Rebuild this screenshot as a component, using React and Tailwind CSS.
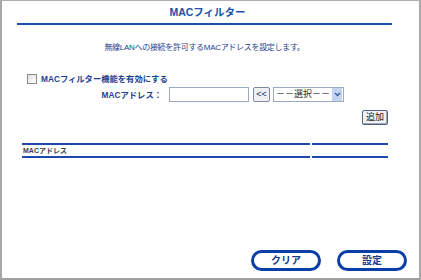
import React from "react";

const font = { fontFamily: '"Liberation Sans", "Noto Sans CJK JP", sans-serif' };

function PillButton({ children }) {
  return (
    <button className="w-[70px] h-[21px] rounded-full border-[3px] border-[#0b3fa8] bg-white text-[10px] font-bold text-[#1a3a8a] leading-none">
      {children}
    </button>
  );
}

export default function App() {
  return (
    <div
      style={font}
      className="w-[421px] h-[280px] bg-white border-t border-l-2 border-r-2 border-b-2 border-t-[#b0b0b0] border-l-[#a8a8a8] border-r-[#a8a8a8] border-b-[#a0a0a0] flex flex-col"
    >
      {/* Title */}
      <div className="pt-[4px] flex flex-col items-center">
        <h1 className="text-[10.5px] font-bold text-[#2050a8] leading-[15px] mr-[6px]">MACフィルター</h1>
        <div className="mt-[3px] w-[375px] h-[2px] bg-[#1d50a8] ml-[-12px]" />
      </div>

      {/* Description */}
      <p className="mt-[17px] text-center text-[8px] tracking-[-0.3px] text-[#1e3f90] leading-[12px] pr-[12px]">
        無線LANへの接続を許可するMACアドレスを設定します。
      </p>

      {/* Enable checkbox */}
      <div className="mt-[19px] ml-[25px] flex items-center gap-[4px]">
        <span className="w-[10px] h-[10px] border border-[#8a8a8a] bg-gradient-to-br from-[#e0e0e0] to-white" />
        <span className="text-[8.3px] font-bold text-[#1e3f90] leading-[12px]">MACフィルター機能を有効にする</span>
      </div>

      {/* MAC address row */}
      <div className="mt-[2px] flex items-center">
        <span className="w-[160px] text-right text-[8.3px] font-bold text-[#1e3f90] leading-[12px]">MACアドレス：</span>
        <input className="ml-[7px] w-[80px] h-[15px] border border-[#9aaac0] bg-white" />
        <button className="ml-[4px] w-[17px] h-[15px] border border-[#7a8aa0] rounded-[2px] bg-[#eef0f4] text-[9px] leading-none text-[#203060]">
          &lt;&lt;
        </button>
        <div className="ml-[3px] w-[71px] h-[15px] border border-[#9aaac0] flex items-center">
          <span className="flex-1 pl-[2px] text-[9px] text-[#303030] leading-none">－－選択－－</span>
          <span className="w-[10px] h-[13px] mr-[1px] bg-[#c4d4ee] flex items-center justify-center">
            <svg width="7" height="5" viewBox="0 0 7 5">
              <path d="M1 1 L3.5 3.5 L6 1" stroke="#3a5a9a" strokeWidth="1.3" fill="none" />
            </svg>
          </span>
        </div>
      </div>

      {/* Add button */}
      <div className="mt-[8px] flex justify-end pr-[31px]">
        <button className="w-[26px] h-[15px] border border-[#506080] rounded-[2px] bg-[#f2f2f4] text-[9px] leading-none text-[#202020] shadow-[inset_-1px_-1px_0_#a0a8b8]">
          追加
        </button>
      </div>

      {/* Table */}
      <div className="mt-[18px] ml-[20px] flex">
        <div className="w-[288px] border-t-2 border-b-2 border-[#1d48b0] h-[15px] flex items-center">
          <span className="text-[7px] font-semibold text-[#404040] leading-none pl-[1px]">MACアドレス</span>
        </div>
        <div className="ml-[2px] w-[76px] border-t-2 border-b-2 border-[#1d48b0] h-[15px]" />
      </div>

      {/* Footer buttons */}
      <div className="mt-auto mb-[7px] flex justify-end gap-[16px] pr-[12px]">
        <PillButton>クリア</PillButton>
        <PillButton>設定</PillButton>
      </div>
    </div>
  );
}
